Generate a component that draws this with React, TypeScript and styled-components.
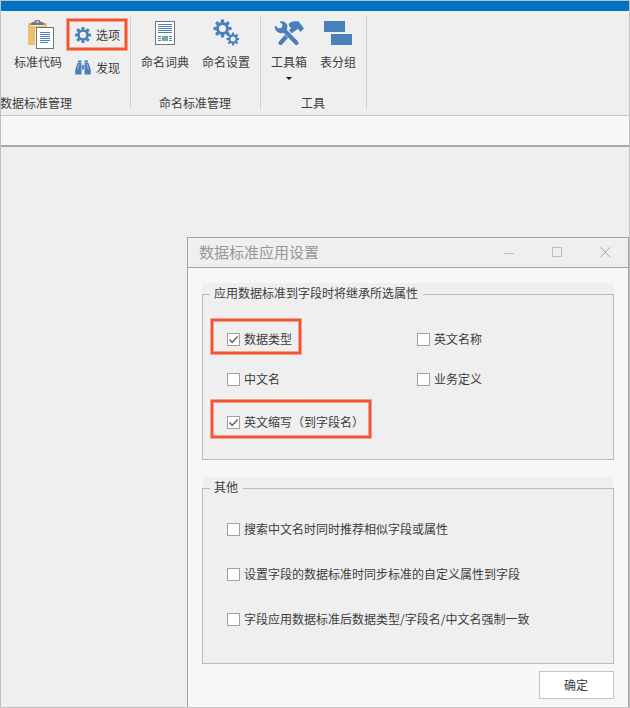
import React from "react";
import styled, { createGlobalStyle, css } from "styled-components";

const BLUE = "#4a80b9";

const GlobalStyle = createGlobalStyle`
  * { box-sizing: border-box; }
  body {
    margin: 0;
    overflow: hidden;
    font-family: "Noto Sans CJK SC", "Liberation Sans", sans-serif;
    font-size: 12px;
    line-height: 16px;
    color: #3c3c3c;
  }
  svg { display: block; flex: none; }
`;

const Window = styled.main`
  position: relative;
  width: 630px;
  height: 708px;
  display: flex;
  flex-direction: column;
  overflow: hidden;
  background: #efefef;
  border: 1px solid #c0c0c0;
`;

const TitleStrip = styled.div`
  height: 10px;
  flex: none;
  background: #0072c6;
`;

const Ribbon = styled.div`
  height: 105px;
  flex: none;
  display: flex;
  padding-top: 6px;
  border-bottom: 1px solid #c6c6c6;
`;

const RibbonGroup = styled.section<{ $width: number; $pad: number }>`
  width: ${(p) => p.$width}px;
  height: 92px;
  display: flex;
  flex-direction: column;
  justify-content: space-between;
  border-right: 1px solid #cfcfcf;
  padding-left: ${(p) => p.$pad}px;
`;

const Tools = styled.div<{ $gap: number }>`
  display: flex;
  gap: ${(p) => p.$gap}px;
`;

const GroupName = styled.div<{ $indent: number }>`
  height: 16px;
  margin-bottom: -2px;
  margin-left: ${(p) => p.$indent}px;
  white-space: nowrap;
`;

const LargeButton = styled.div`
  display: flex;
  flex-direction: column;
  align-items: center;
  padding-top: 2px;
  white-space: nowrap;
  > span { margin-top: 5px; }
`;

const DropArrow = styled.i`
  margin-top: 7px;
  border: solid transparent;
  border-width: 3px 3px 0;
  border-top-color: #111;
`;

const SmallButtons = styled.div`
  display: flex;
  flex-direction: column;
  gap: 17px;
  padding-top: 10px;
`;

/* Orange callout ring drawn round whatever contains it. */
const ring = css`
  content: "";
  position: absolute;
  border: 2px solid #f4532f;
  box-shadow: 0 0 0 1px rgba(244, 83, 47, 0.5), inset 0 0 0 1px rgba(244, 83, 47, 0.5);
`;

const SmallButton = styled.div<{ $marked?: boolean }>`
  position: relative;
  display: flex;
  align-items: center;
  gap: 5px;
  height: 16px;
  white-space: nowrap;
  ${(p) => p.$marked && css`&::after { ${ring} inset: -8px -7px -7px -8px; }`}
`;

const SubBar = styled.div`
  height: 31px;
  flex: none;
  background: #f7f7f7;
  border-bottom: 2px solid #a8a8a8;
`;

const Dialog = styled.section`
  position: absolute;
  left: 186px;
  top: 236px;
  width: 442px;
  height: 480px;
  border: 1px solid #a2a2a2;
  background: #f7f7f7;
`;

const DialogHeader = styled.header`
  height: 30px;
  display: flex;
  align-items: center;
  justify-content: space-between;
  padding: 0 17px 0 11px;
  background: #efefef;
  border-bottom: 1px solid #a2a2a2;
`;

const DialogTitle = styled.h1`
  margin: -2px 0 0;
  font-size: 15px;
  line-height: 20px;
  font-weight: 400;
  color: #979797;
`;

const Controls = styled.div`
  display: flex;
  gap: 37px;
`;

const DialogBody = styled.div`
  display: flex;
  flex-direction: column;
  padding: 15px 14px 0;
`;

const GroupBox = styled.div<{ $height: number }>`
  height: ${(p) => p.$height}px;
  margin-bottom: 17px;
  padding-top: 11px;
  background: #efefef;
`;

const GroupFrame = styled.div`
  height: 100%;
  border: 1px solid #bcbcbc;
`;

const Legend = styled.div`
  width: max-content;
  height: 18px;
  margin: -11px 0 0 7px;
  padding: 0 5px 0 4px;
  line-height: 17px;
  background: #efefef;
`;

const PropertyGrid = styled.div`
  display: grid;
  grid-template-columns: 190px auto;
  grid-template-rows: 40px 43px 16px;
  padding: 29px 0 0 24px;
`;

const OptionList = styled.div`
  display: flex;
  flex-direction: column;
  gap: 29px;
  padding: 25px 0 0 24px;
`;

const Option = styled.div<{ $ring?: string }>`
  position: relative;
  display: flex;
  align-items: center;
  gap: 4px;
  width: max-content;
  height: 16px;
  white-space: nowrap;
  ${(p) => p.$ring && css`&::after { ${ring} inset: ${p.$ring}; }`}
`;

const Box = styled.span`
  width: 13px;
  height: 13px;
  background: #fff;
  border: 1px solid #a0a0a0;
`;

const ConfirmButton = styled.button`
  align-self: flex-end;
  width: 75px;
  height: 28px;
  margin-top: -10px;
  padding: 0 1px 0 0;
  border: 1px solid #c4c4c4;
  background: #fff;
  color: #3c3c3c;
  font: inherit;
`;

const TEETH = [0, 45, 90, 135, 180, 225, 270, 315];

function Gear({ x, y, r }: { x: number; y: number; r: number }) {
  return (
    <g transform={`translate(${x} ${y}) scale(${r / 8})`}>
      <circle r="4.500" fill="none" stroke={BLUE} strokeWidth="2.600" />
      {TEETH.map((a) => (
        <path key={a} d="M-1.700 -5.200 L-1.300 -8.200 H1.300 L1.700 -5.200Z" fill={BLUE} transform={`rotate(${a})`} />
      ))}
    </g>
  );
}

const GearIcon = () => (
  <svg width="16" height="16"><Gear x={8} y={8} r={8} /></svg>
);

const GearsIcon = () => (
  <svg width="26" height="30">
    <Gear x={9.5} y={9.5} r={8.8} />
    <Gear x={20} y={20} r={6.3} />
  </svg>
);

const BinocularsIcon = () => (
  <svg width="16" height="16" fill={BLUE}>
    <path d="M3 .5h3.500v2h-3.500ZM9.500.5h3.500v2h-3.500Z" />
    <path d="M2.500 3h4v11.500H.300V9.500ZM13.500 3h-4v11.500h6.200V9.500Z" />
    <rect x="6.500" y="5" width="3" height="4.500" />
    <path d="M4 4 2.500 9.500M12 4l1.500 5.500M6.700 4v6M9.300 4v6" stroke="#b9cde2" strokeWidth=".7" fill="none" />
  </svg>
);

const ClipboardIcon = () => (
  <svg width="32" height="30">
    <g transform="translate(5)">
      <path d="M1 4h19v5H8v17H1Z" fill="#efc06a" />
      <path d="M3.500 3h14v4h-14Z" fill="#efefef" />
      <path d="M3.500 6V4.500L5.500 3h2V2.500q0-1.500 1.500-1.500h3q1.500 0 1.500 1.500V3h2l2 1.500V6Z" fill="#777" />
      <rect x="9.500" y="2.200" width="2" height="1.500" fill="#efefef" />
      <rect x="9.500" y="8.500" width="17" height="21" fill="#fff" stroke="#747474" />
      <path d="M13 13.500h10M13 15.500h10M13 17.500h10M13 19.500h10M13 21.500h10M13 23.500h8" stroke={BLUE} />
    </g>
  </svg>
);

const DocumentIcon = () => (
  <svg width="20" height="30">
    <rect x=".5" y="2.500" width="19" height="23" fill="#fff" stroke="#747474" />
    <path d="M3 5.500h14M3 7.500h14M3 9.500h14M3 11.500h14M3 13.500h14M3 17.500h3M3 19.500h3M3 21.500h3M14 17.500h3M14 19.500h3M14 21.500h3" stroke={BLUE} />
    <rect x="7" y="17" width="6" height="5" fill="#76a797" />
  </svg>
);

const ToolboxIcon = () => (
  <svg width="30" height="30" fill={BLUE}>
    <path d="M6.500 24 20 9" stroke={BLUE} strokeWidth="4.200" strokeLinecap="round" />
    <path d="M14.500 5Q17 2.300 20 2.300H24.500L30 9.500 26.500 13 23.800 9.800 20.500 12.500 15.500 7.500Z" />
    <path d="M12 12.500 20.500 21.500" stroke="#efefef" strokeWidth="6" />
    <path d="M9.500 10.500 22.500 24" stroke={BLUE} strokeWidth="4.200" strokeLinecap="round" />
    <path d="M5.500 2.500Q10 1.500 12.300 4.500T12.500 11L9 14.300Q4 14.500 2 11.500T1.300 6.500L4.500 9.500 7.700 8.800 8.500 5.600Z" />
  </svg>
);

const TableGroupIcon = () => (
  <svg width="28" height="30" fill={BLUE}>
    <rect y="2" width="21" height="11" />
    <rect x="7" y="15" width="21" height="11" />
  </svg>
);

function CheckOption({ label, checked, ringInset }: { label: string; checked?: boolean; ringInset?: string }) {
  return (
    <Option $ring={ringInset} role="checkbox" aria-checked={!!checked}>
      <Box>
        {checked && (
          <svg width="11" height="11" fill="none" stroke="#666" strokeWidth="1.500">
            <path d="m1.500 5.500 2.700 2.800L9.700 2.500" />
          </svg>
        )}
      </Box>
      <span>{label}</span>
    </Option>
  );
}

export default function App() {
  return (
    <>
      <GlobalStyle />
      <Window>
        <TitleStrip />
        <Ribbon>
          <RibbonGroup $width={130} $pad={13}>
            <Tools $gap={13}>
              <LargeButton><ClipboardIcon /><span>标准代码</span></LargeButton>
              <SmallButtons>
                <SmallButton $marked><GearIcon /><span>选项</span></SmallButton>
                <SmallButton><BinocularsIcon /><span>发现</span></SmallButton>
              </SmallButtons>
            </Tools>
            <GroupName $indent={-14}>数据标准管理</GroupName>
          </RibbonGroup>
          <RibbonGroup $width={130} $pad={10}>
            <Tools $gap={13}>
              <LargeButton><DocumentIcon /><span>命名词典</span></LargeButton>
              <LargeButton><GearsIcon /><span>命名设置</span></LargeButton>
            </Tools>
            <GroupName $indent={18}>命名标准管理</GroupName>
          </RibbonGroup>
          <RibbonGroup $width={106} $pad={10}>
            <Tools $gap={13}>
              <LargeButton><ToolboxIcon /><span>工具箱</span><DropArrow /></LargeButton>
              <LargeButton><TableGroupIcon /><span>表分组</span></LargeButton>
            </Tools>
            <GroupName $indent={30}>工具</GroupName>
          </RibbonGroup>
        </Ribbon>
        <SubBar />
        <Dialog>
          <DialogHeader>
            <DialogTitle>数据标准应用设置</DialogTitle>
            <Controls>
              <svg width="11" height="11" stroke="#bdbdbd"><path d="M0 6.500h10" /></svg>
              <svg width="11" height="11" stroke="#bdbdbd" fill="none"><path d="M.5.500h9v9h-9Z" /></svg>
              <svg width="11" height="11" stroke="#a4a4a4"><path d="m.3.300 10 10m0-10-10 10" /></svg>
            </Controls>
          </DialogHeader>
          <DialogBody>
            <GroupBox $height={177}>
              <GroupFrame>
                <Legend>应用数据标准到字段时将继承所选属性</Legend>
                <PropertyGrid>
                  <CheckOption label="数据类型" checked ringInset="-12px -9px -7px -16px" />
                  <CheckOption label="英文名称" />
                  <CheckOption label="中文名" />
                  <CheckOption label="业务定义" />
                  <CheckOption label="英文缩写（到字段名）" checked ringInset="-14px -7px -8px -16px" />
                </PropertyGrid>
              </GroupFrame>
            </GroupBox>
            <GroupBox $height={187}>
              <GroupFrame>
                <Legend>其他</Legend>
                <OptionList>
                  <CheckOption label="搜索中文名时同时推荐相似字段或属性" />
                  <CheckOption label="设置字段的数据标准时同步标准的自定义属性到字段" />
                  <CheckOption label="字段应用数据标准后数据类型/字段名/中文名强制一致" />
                </OptionList>
              </GroupFrame>
            </GroupBox>
            <ConfirmButton>确定</ConfirmButton>
          </DialogBody>
        </Dialog>
      </Window>
    </>
  );
}
